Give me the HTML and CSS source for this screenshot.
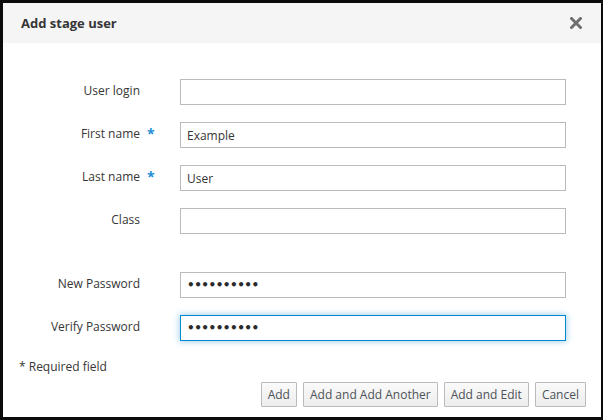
FILE: index.html
```html
<!DOCTYPE html>
<html>
<head>
<meta charset="utf-8">
<link rel="stylesheet" href="styles.css">
</head>
<body>
<div class="modal">
  <div class="modal-header">
    <h4 class="modal-title">Add stage user</h4>
    <button class="close" aria-label="Close">
      <svg width="12" height="12" viewBox="0 0 12 12"><path d="M1.5 1.5 L10.5 10.5 M10.5 1.5 L1.5 10.5" stroke="#6f6f6f" stroke-width="3" stroke-linecap="square"/></svg>
    </button>
  </div>
  <div class="modal-body">
    <div class="form">
      <label class="lbl">User login</label><span class="req"></span><input class="ctl" type="text" value="">
      <label class="lbl">First name</label><span class="req">*</span><input class="ctl" type="text" value="Example">
      <label class="lbl">Last name</label><span class="req">*</span><input class="ctl" type="text" value="User">
      <label class="lbl">Class</label><span class="req"></span><input class="ctl" type="text" value="">
    </div>
    <div class="form form-pw">
      <label class="lbl">New Password</label><span class="req"></span><input class="ctl pw" type="password" value="aaaaaaaaaa">
      <label class="lbl">Verify Password</label><span class="req"></span><input class="ctl pw focus" type="password" value="aaaaaaaaaa">
    </div>
    <div class="note">* Required field</div>
  </div>
  <div class="modal-footer">
    <button class="btn">Add</button>
    <button class="btn">Add and Add Another</button>
    <button class="btn">Add and Edit</button>
    <button class="btn">Cancel</button>
  </div>
</div>
</body>
</html>
```
FILE: styles.css
```css
html, body {
  margin: 0;
  padding: 0;
}
body {
  background: #0b0b0b;
  width: 603px;
  height: 420px;
  padding: 3px 2px 3px 3px;
  box-sizing: border-box;
  font-family: "Open Sans", "Noto Sans", sans-serif;
  font-size: 12px;
  color: #363636;
}
.modal {
  background: #fff;
  height: 100%;
  display: flex;
  flex-direction: column;
}
.modal-header {
  background: #f5f5f5;
  height: 40px;
  display: flex;
  align-items: center;
  justify-content: space-between;
  padding: 0 19px 0 18px;
  box-sizing: border-box;
}
.modal-title {
  margin: 0;
  font-size: 13px;
  font-weight: 700;
  color: #363636;
}
.close {
  border: 0;
  background: none;
  padding: 0;
  width: 12px;
  height: 12px;
  display: flex;
}
.modal-body {
  padding: 36px 0 0 0;
  flex: 1;
}
.form {
  display: grid;
  grid-template-columns: 137px 40px 386px;
  grid-auto-rows: 26px;
  row-gap: 17px;
  align-items: center;
}
.form-pw {
  margin-top: 38px;
}
.lbl {
  text-align: right;
  font-weight: 400;
  color: #363636;
  padding-bottom: 4px;
}
.req {
  color: #1f8fd6;
  font-weight: 700;
  padding-left: 7px;
  padding-bottom: 3px;
  font-size: 14px;
}
.ctl {
  height: 26px;
  box-sizing: border-box;
  border: 1px solid #bbb;
  padding: 0 6px;
  font-family: "Open Sans", "Noto Sans", sans-serif;
  font-size: 12px;
  color: #363636;
  outline: none;
  margin: 0;
}
.ctl.pw {
  font-family: "DejaVu Sans", sans-serif;
  font-size: 12px;
  font-weight: 700;
  letter-spacing: -0.5px;
  color: #2b2b2b;
}
.ctl.focus {
  border-color: #0088ce;
  box-shadow: 0 0 6px 1px rgba(0, 136, 206, 0.35);
}
.note {
  margin-top: 17px;
  padding-left: 16px;
  color: #363636;
}
.modal-footer {
  display: flex;
  justify-content: flex-end;
  gap: 6px;
  padding: 0 15px 10px 0;
}
.btn {
  height: 25px;
  box-sizing: border-box;
  border: 1px solid #bbb;
  background: linear-gradient(#fafafa, #ededed);
  color: #4d5258;
  font-family: "Open Sans", "Noto Sans", sans-serif;
  font-size: 12px;
  padding: 0 6px;
  border-radius: 1px;
}
```
